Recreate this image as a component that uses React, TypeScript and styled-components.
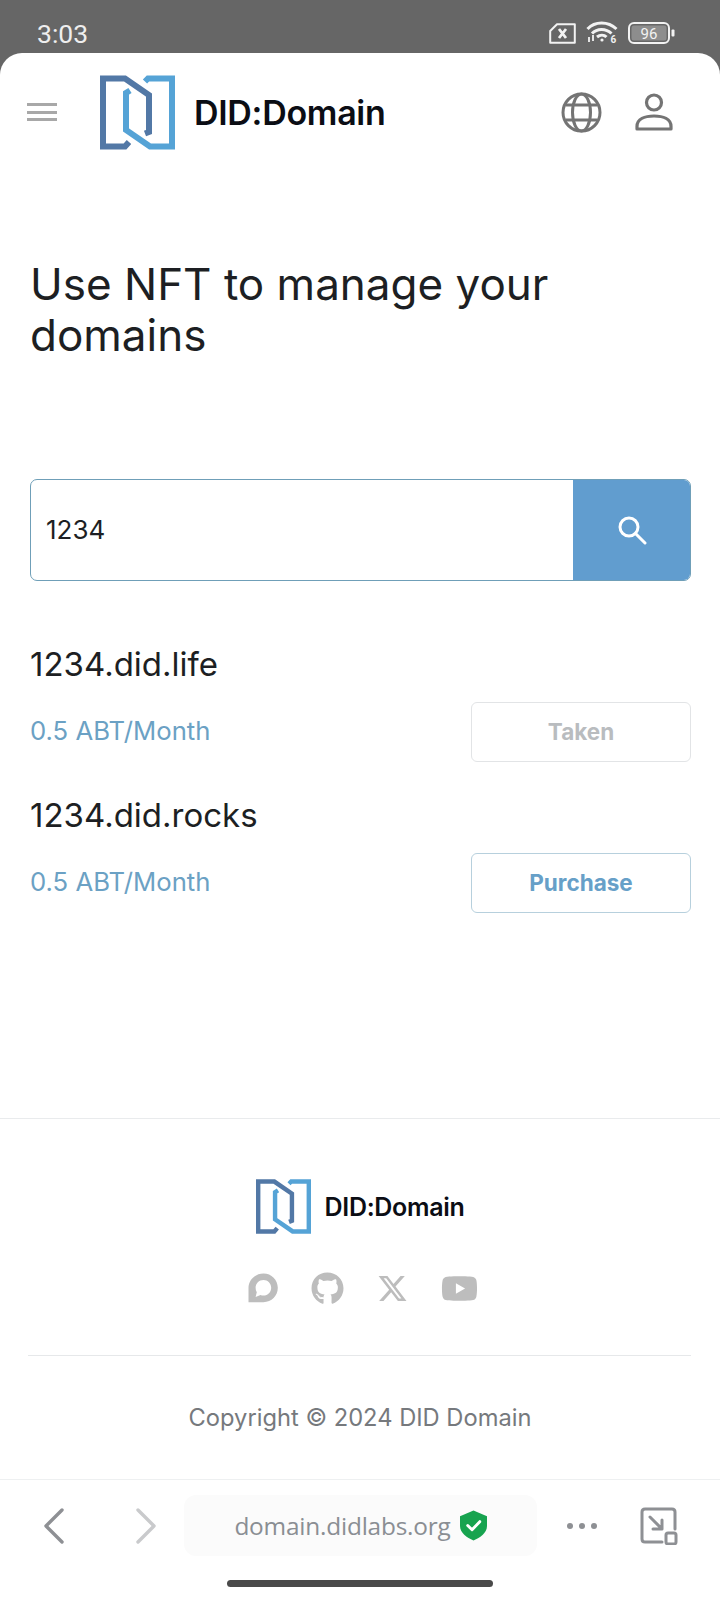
import React from 'react';
import styled, { createGlobalStyle } from 'styled-components';
import { FaGithub, FaXTwitter, FaYoutube } from 'react-icons/fa6';

const GlobalStyle = createGlobalStyle`
  html, body { margin: 0; padding: 0; background: #666666; }
  * { box-sizing: border-box; }
`;

const Screen = styled.div`
  width: 720px;
  height: 1600px;
  overflow: hidden;
  background: #666666;
  font-family: Inter, "Noto Sans", sans-serif;
  display: flex;
  flex-direction: column;
`;

const StatusBar = styled.div`
  height: 53px;
  flex: none;
  display: flex;
  align-items: center;
  padding: 13px 45px 0 37px;
  color: #eeeeee;
`;

const Clock = styled.span`
  font-family: Roboto, sans-serif;
  font-size: 26.5px;
  flex: 1;
`;

const StatusIcons = styled.div`
  display: flex;
  align-items: center;
  gap: 10px;
`;

const Sheet = styled.div`
  flex: 1;
  background: #ffffff;
  border-radius: 22px 22px 0 0;
  display: flex;
  flex-direction: column;
`;

const Header = styled.header`
  display: flex;
  align-items: center;
  height: 118px;
  padding: 0 47px 0 27px;
  flex: none;
`;

const MenuBars = styled.div`
  width: 30px;
  height: 18px;
  margin-right: 43px;
  display: flex;
  flex-direction: column;
  justify-content: space-between;
  span {
    height: 3px;
    background: #a8a8a8;
  }
`;

const HeaderBrand = styled.div`
  display: flex;
  align-items: center;
  gap: 19px;
`;

const BrandName = styled.span<{ $size: number }>`
  font-size: ${({ $size }) => $size}px;
  font-weight: 600;
  color: #0b0d14;
  letter-spacing: -0.3px;
  white-space: nowrap;
`;

const HeaderActions = styled.div`
  margin-left: auto;
  display: flex;
  align-items: center;
  gap: 33px;
`;

const Main = styled.main`
  flex: 1;
  padding: 0 29px 0 30px;
  display: flex;
  flex-direction: column;
`;

const Heading = styled.h1`
  margin: 88px 0 0;
  font-size: 44px;
  line-height: 51px;
  font-weight: 400;
  color: #1d1f23;
`;

const SearchBox = styled.div`
  margin-top: 118px;
  height: 102px;
  display: flex;
  border: 1px solid #6f9fb8;
  border-radius: 7px;
  overflow: hidden;
`;

const SearchValue = styled.div`
  flex: 1;
  display: flex;
  align-items: center;
  padding: 0 0 2px 15px;
  font-size: 26px;
  color: #1d1f23;
`;

const SearchButton = styled.div`
  width: 118px;
  margin: -1px;
  background: #619dcf;
  display: flex;
  align-items: center;
  justify-content: center;
`;

const ResultList = styled.div`
  margin-top: 60px;
  display: flex;
  flex-direction: column;
  gap: 30px;
`;

const Result = styled.div`
  display: flex;
  flex-direction: column;
`;

const DomainName = styled.div`
  font-size: 33px;
  line-height: 46px;
  height: 61px;
  color: #1d1f23;
`;

const ResultRow = styled.div`
  display: flex;
  align-items: center;
  justify-content: space-between;
`;

const Price = styled.span`
  font-size: 25.7px;
  padding-bottom: 4px;
  color: #6ba1c4;
`;

const ResultButton = styled.div<{ $taken?: boolean }>`
  width: 220px;
  height: 60px;
  padding-bottom: 2px;
  border-radius: 6px;
  border: 1.5px solid ${({ $taken }) => ($taken ? '#e2e4e6' : '#b7d0dd')};
  color: ${({ $taken }) => ($taken ? '#b9bcbf' : '#67a0c8')};
  font-size: 22.5px;
  font-weight: 700;
  display: flex;
  align-items: center;
  justify-content: center;
`;

const Footer = styled.footer`
  flex: none;
  height: 361px;
  border-top: 1px solid #e9ebed;
  padding: 0 29px 0 28px;
  display: flex;
  flex-direction: column;
  align-items: center;
`;

const FooterBrand = styled.div`
  margin-top: 60px;
  margin-left: 1px;
  display: flex;
  align-items: center;
  gap: 14px;
`;

const SocialRow = styled.div`
  margin-top: 37px;
  margin-left: 6px;
  display: flex;
  align-items: center;
  gap: 33px;
  color: #bdbdbd;
  height: 34px;
`;

const FooterRule = styled.div`
  width: 100%;
  height: 1px;
  background: #e6e8ea;
  margin-top: 50px;
`;

const Copyright = styled.div`
  margin: 47px 0 0 1px;
  font-size: 23.7px;
  color: #76797d;
`;

const BrowserBar = styled.div`
  flex: none;
  height: 121px;
  border-top: 1px solid #eef0f1;
  padding: 15px 43px 0 44px;
  display: flex;
  flex-direction: column;
  align-items: stretch;
`;

const BrowserRow = styled.div`
  display: flex;
  align-items: center;
  height: 61px;
`;

const ForwardSlot = styled.div`
  width: 92px;
  flex: none;
  display: flex;
  justify-content: flex-end;
`;

const Chevron = styled.svg<{ $flip?: boolean }>`
  flex: none;
  transform: ${({ $flip }) => ($flip ? 'scaleX(-1)' : 'none')};
`;

const AddressPill = styled.div`
  width: 353px;
  height: 61px;
  margin: 0 30px 0 28px;
  background: #fbfbfb;
  border-radius: 12px;
  flex: none;
  display: flex;
  align-items: center;
  justify-content: center;
  gap: 9px;
`;

const AddressText = styled.span`
  font-family: "Open Sans", sans-serif;
  font-size: 24.4px;
  color: #8a8e93;
  letter-spacing: -0.2px;
`;

const MoreDots = styled.div`
  display: flex;
  gap: 6px;
  width: 30px;
  margin-right: 43px;
  flex: none;
  span {
    width: 6px;
    height: 6px;
    border-radius: 50%;
    background: #8e9094;
  }
`;

const ResizeSvg = styled.svg`
  flex: none;
`;

const HomeIndicator = styled.div`
  width: 266px;
  height: 7px;
  border-radius: 4px;
  background: #4a4a4a;
  margin: 24px 0 0 183px;
`;

const Logo = ({ size }: { size: number }) => (
  <svg width={size} height={size} viewBox="0 0 75 75" fill="none" strokeWidth="6">
    <path d="M29 67 L25 71.5 H3 V3.5 H25 L49 20 V57 L45 58.5" stroke="#5278a6" />
    <path d="M45 6.5 L48 3.5 H72 V71.5 H50 L26 55 V18 L30 15.5" stroke="#55a3d6" />
  </svg>
);

const SimIcon = () => (
  <svg width="27" height="21" viewBox="0 0 27 21" fill="none" stroke="#f2f2f2">
    <path d="M8 1.2 H25.8 V19.8 H1.2 V8 Z" strokeWidth="2" strokeLinejoin="round" />
    <path d="M10 6 L17 15 M17 6 L10 15" strokeWidth="2.8" />
  </svg>
);

const WifiIcon = () => (
  <svg width="32" height="26" viewBox="0 0 32 26" fill="none" stroke="#f2f2f2" strokeWidth="3">
    <path d="M1.5 9 C9 1 22 1 30.5 9" />
    <path d="M6 13.5 C11 8 20 8 25.5 13.5" />
    <path d="M11 17 C14 14.5 18 14.5 20.5 17" />
    <circle cx="16" cy="20" r="1.6" fill="#f2f2f2" stroke="none" />
    <path d="M3 17 V22 M7 15 V21" strokeWidth="1.8" />
    <text x="24.5" y="23" fontFamily="Roboto, sans-serif" fontSize="10" fontWeight="700" fill="#f2f2f2" stroke="none">6</text>
  </svg>
);

const BatteryIcon = () => (
  <svg width="47" height="22" viewBox="0 0 47 22">
    <rect x="1" y="1" width="40" height="20" rx="5" fill="none" stroke="#f2f2f2" strokeWidth="2" />
    <rect x="3.5" y="3.5" width="35" height="15" rx="2.5" fill="#8d8d8d" />
    <rect x="43.5" y="7.5" width="3" height="7" rx="1" fill="#f2f2f2" />
    <text x="21" y="16.5" textAnchor="middle" fontFamily="Roboto, sans-serif" fontSize="15" fill="#f2f2f2">96</text>
  </svg>
);

const GlobeIcon = () => (
  <svg width="41" height="41" viewBox="0 0 41 41" fill="none" stroke="#747474" strokeWidth="3">
    <circle cx="20.5" cy="20.5" r="18.5" />
    <ellipse cx="20.5" cy="20.5" rx="9" ry="18.5" />
    <path d="M4.5 13 H36.5 M4.5 28 H36.5" />
  </svg>
);

const UserIcon = () => (
  <svg width="38" height="38" viewBox="0 0 38 38" fill="none" stroke="#747474" strokeWidth="3.2">
    <circle cx="19" cy="9.5" r="7.5" />
    <path d="M2 33.5 C2 26 10 23 19 23 C28 23 36 26 36 33.5 V36 H2 Z" strokeLinejoin="round" />
  </svg>
);

const SearchIcon = () => (
  <svg width="30" height="30" viewBox="0 0 30 30" fill="none" stroke="#ffffff" strokeWidth="3">
    <circle cx="12" cy="12" r="9" />
    <path d="M18.5 18.5 L28 28" strokeLinecap="round" />
  </svg>
);

const ChatIcon = () => (
  <svg width="30" height="30" viewBox="0 0 30 30">
    <path
      fillRule="evenodd"
      fill="#bdbdbd"
      d="M15.5 0.5 C23.5 0.5 29.8 6.8 29.8 14.8 C29.8 22.8 23.5 29.2 15.5 29.2 H0.5 V14.8 C0.5 6.8 7.5 0.5 15.5 0.5 Z M15.5 7 C11 7 7.6 10.5 7.6 14.8 C7.6 16.5 8 18 8.8 19.2 L7.6 24 L12.5 22 C13.4 22.4 14.4 22.6 15.5 22.6 C19.8 22.6 23.2 19.2 23.2 14.8 C23.2 10.5 19.8 7 15.5 7 Z"
    />
  </svg>
);

const ChevronIcon = ({ flip, color }: { flip?: boolean; color: string }) => (
  <Chevron $flip={flip} width="20" height="36" viewBox="0 0 20 36" fill="none" stroke={color} strokeWidth="3.4" strokeLinecap="round" strokeLinejoin="round">
    <path d="M18 2 L2 18 L18 34" />
  </Chevron>
);

const ShieldIcon = () => (
  <svg width="27" height="31" viewBox="0 0 28 31">
    <path d="M14 0 L28 6 V16 C28 23 21 28 14 31 C7 28 0 23 0 16 V6 Z" fill="#17a34f" />
    <path d="M8 15.5 L12.5 20 L20.5 11.5" fill="none" stroke="#ffffff" strokeWidth="3" strokeLinecap="round" strokeLinejoin="round" />
  </svg>
);

const ResizeIcon = () => (
  <ResizeSvg width="38" height="38" viewBox="0 0 38 38" fill="none" stroke="#8e9094" strokeWidth="3" strokeLinecap="round" strokeLinejoin="round">
    <path d="M22 35 H5 C3 35 2 34 2 32 V5 C2 3 3 2 5 2 H32 C34 2 35 3 35 5 V22" />
    <path d="M10 10 L22 22 M22 13 V22 H13" />
    <rect x="26" y="26" width="10" height="11" rx="2" />
  </ResizeSvg>
);

const results = [
  { domain: '1234.did.life', action: 'Taken', taken: true },
  { domain: '1234.did.rocks', action: 'Purchase', taken: false },
];

export default function App() {
  return (
    <Screen>
      <GlobalStyle />
      <StatusBar>
        <Clock>3:03</Clock>
        <StatusIcons>
          <SimIcon />
          <WifiIcon />
          <BatteryIcon />
        </StatusIcons>
      </StatusBar>
      <Sheet>
        <Header>
          <MenuBars>
            <span />
            <span />
            <span />
          </MenuBars>
          <HeaderBrand>
            <Logo size={75} />
            <BrandName $size={34}>DID:Domain</BrandName>
          </HeaderBrand>
          <HeaderActions>
            <GlobeIcon />
            <UserIcon />
          </HeaderActions>
        </Header>
        <Main>
          <Heading>
            Use NFT to manage your
            <br />
            domains
          </Heading>
          <SearchBox>
            <SearchValue>1234</SearchValue>
            <SearchButton>
              <SearchIcon />
            </SearchButton>
          </SearchBox>
          <ResultList>
            {results.map((r) => (
              <Result key={r.domain}>
                <DomainName>{r.domain}</DomainName>
                <ResultRow>
                  <Price>0.5 ABT/Month</Price>
                  <ResultButton $taken={r.taken}>{r.action}</ResultButton>
                </ResultRow>
              </Result>
            ))}
          </ResultList>
        </Main>
        <Footer>
          <FooterBrand>
            <Logo size={55} />
            <BrandName $size={25}>DID:Domain</BrandName>
          </FooterBrand>
          <SocialRow>
            <ChatIcon />
            <FaGithub size={33} />
            <FaXTwitter size={31} />
            <FaYoutube size={37} />
          </SocialRow>
          <FooterRule />
          <Copyright>Copyright © 2024 DID Domain</Copyright>
        </Footer>
        <BrowserBar>
          <BrowserRow>
            <ChevronIcon color="#8e9094" />
            <ForwardSlot>
              <ChevronIcon flip color="#c9cacc" />
            </ForwardSlot>
            <AddressPill>
              <AddressText>domain.didlabs.org</AddressText>
              <ShieldIcon />
            </AddressPill>
            <MoreDots>
              <span />
              <span />
              <span />
            </MoreDots>
            <ResizeIcon />
          </BrowserRow>
          <HomeIndicator />
        </BrowserBar>
      </Sheet>
    </Screen>
  );
}
